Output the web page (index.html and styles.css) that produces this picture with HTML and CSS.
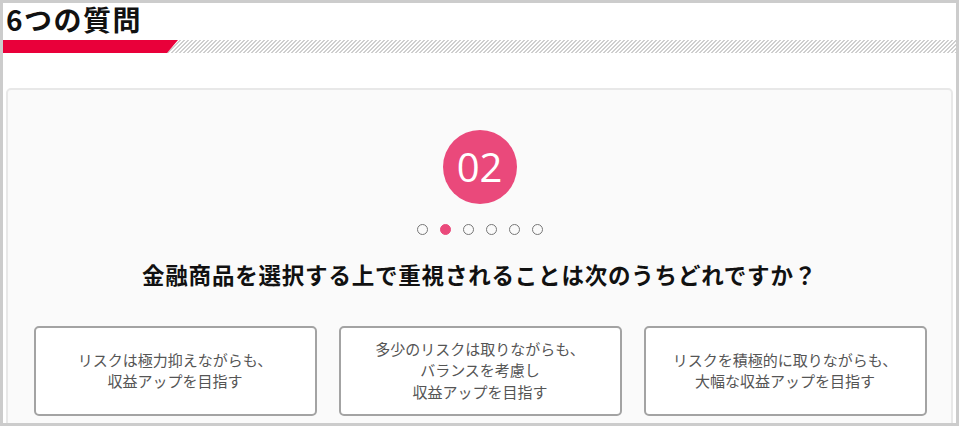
FILE: index.html
```html
<!DOCTYPE html>
<html lang="ja">
<head>
<meta charset="utf-8">
<link rel="stylesheet" href="styles.css">
</head>
<body>
<div class="frame">
  <h2 class="title">6つの質問</h2>
  <div class="bar"><div class="bar-red"></div></div>
  <section class="card">
    <div class="num">02</div>
    <div class="dots">
      <span class="dot"></span>
      <span class="dot active"></span>
      <span class="dot"></span>
      <span class="dot"></span>
      <span class="dot"></span>
      <span class="dot"></span>
    </div>
    <p class="question">金融商品を選択する上で重視されることは次のうちどれですか？</p>
    <div class="options">
      <button class="opt">リスクは極力抑えながらも、<br>収益アップを目指す</button>
      <button class="opt">多少のリスクは取りながらも、<br>バランスを考慮し<br>収益アップを目指す</button>
      <button class="opt">リスクを積極的に取りながらも、<br>大幅な収益アップを目指す</button>
    </div>
  </section>
</div>
</body>
</html>
```
FILE: styles.css
```css
html, body {
  margin: 0;
  padding: 0;
  background: #fff;
}
body {
  font-family: "Noto Sans CJK JP", "Noto Sans", sans-serif;
}
.frame {
  box-sizing: border-box;
  width: 959px;
  height: 426px;
  border: 3px solid #cccccc;
  overflow: hidden;
  background: #fff;
}
.title {
  margin: 0;
  padding: 0 0 0 3px;
  height: 37px;
  font-size: 28px;
  line-height: 32px;
  font-weight: 700;
  color: #111;
  letter-spacing: 1.5px;
}
.bar {
  height: 13px;
  background: repeating-linear-gradient(135deg, #cfcfcf 0 1.4px, #ffffff 1.4px 2.83px);
}
.bar-red {
  width: 175px;
  height: 13px;
  background: #e9003a;
  clip-path: polygon(0 0, 100% 0, calc(100% - 11px) 100%, 0 100%);
}
.card {
  margin: 35px 3px 0 3px;
  height: 400px;
  box-sizing: border-box;
  border: 2px solid #e8e8e8;
  border-radius: 5px;
  background: #fafafa;
  padding-top: 40px;
  display: flex;
  flex-direction: column;
  align-items: center;
}
.num {
  width: 74px;
  height: 74px;
  border-radius: 50%;
  background: #ea497b;
  color: #fff;
  font-family: "Open Sans", sans-serif;
  font-size: 40px;
  line-height: 74px;
  text-align: center;
}
.dots {
  display: flex;
  gap: 12px;
  margin-top: 20px;
  margin-left: 1px;
}
.dot {
  box-sizing: border-box;
  width: 11px;
  height: 11px;
  border-radius: 50%;
  border: 1.5px solid #777;
}
.dot.active {
  border-color: #ea497b;
  background: #ea497b;
}
.question {
  margin: 14px 0 0 0;
  font-size: 22.5px;
  font-weight: 700;
  letter-spacing: 0.8px;
  color: #111;
  line-height: 50px;
}
.options {
  display: flex;
  gap: 22px;
  margin-top: 27px;
  margin-left: 1px;
}
.opt {
  width: 283px;
  height: 90px;
  box-sizing: border-box;
  border: 2px solid #a3a3a3;
  border-radius: 5px;
  background: #fff;
  font-family: "Noto Sans CJK JP", "Noto Sans", sans-serif;
  font-size: 15px;
  line-height: 21.5px;
  color: #555;
  text-align: center;
  padding: 0 0 2px 0;
}
```
